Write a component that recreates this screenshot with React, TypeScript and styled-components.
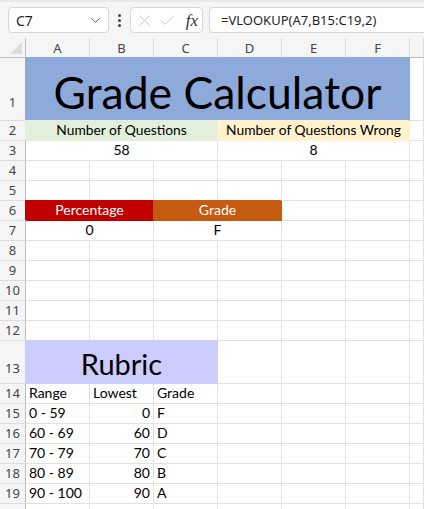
import React from "react";
import styled, { createGlobalStyle } from "styled-components";
import { ChevronDown, X, Check } from "lucide-react";

const GlobalStyle = createGlobalStyle`
  html, body {
    margin: 0;
    padding: 0;
    background: #ffffff;
    overflow: hidden;
  }
  * {
    box-sizing: border-box;
  }
`;

const CELL_FONT = `Lato, "Liberation Sans", sans-serif`;
const UI_FONT = `"Noto Sans", "Open Sans", sans-serif`;

const Window = styled.div`
  width: 424px;
  height: 509px;
  display: flex;
  flex-direction: column;
  background: #ffffff;
  overflow: hidden;
`;

const Toolbar = styled.div`
  height: 38px;
  flex: 0 0 38px;
  display: flex;
  align-items: center;
  padding: 0 0 0 8px;
  background: #f5f5f5;
  border-top: 2px solid #e9e9e9;
`;

const NameBox = styled.div`
  width: 101px;
  height: 26px;
  display: flex;
  align-items: center;
  justify-content: space-between;
  padding: 0 5px 0 7px;
  background: #ffffff;
  border: 1px solid #d6d6d6;
  border-radius: 4px;
  font-family: ${UI_FONT};
  font-size: 14px;
  color: #1f1f1f;
  & svg {
    color: #555;
  }
`;

const Dots = styled.div`
  width: 21px;
  display: flex;
  flex-direction: column;
  align-items: center;
  gap: 2px;
  & span {
    width: 3px;
    height: 3px;
    border-radius: 50%;
    background: #444;
  }
`;

const FuncBox = styled.div`
  width: 73px;
  height: 26px;
  display: flex;
  align-items: center;
  padding: 0 4px 0 4px;
  gap: 4px;
  background: #ffffff;
  border: 1px solid #d6d6d6;
  border-radius: 4px;
  & svg {
    color: #c4c4c4;
  }
`;

const Fx = styled.span`
  margin-left: auto;
  font-family: "Liberation Serif", "DejaVu Serif", serif;
  font-style: italic;
  font-size: 17px;
  color: #333;
  line-height: 1;
`;

const FormulaBox = styled.div`
  flex: 1;
  height: 26px;
  margin-left: 6px;
  display: flex;
  align-items: center;
  padding-left: 11px;
  background: #ffffff;
  border: 1px solid #d6d6d6;
  border-right: none;
  border-radius: 4px 0 0 4px;
  font-family: ${UI_FONT};
  font-size: 13px;
  color: #1f1f1f;
  white-space: nowrap;
`;

const Sheet = styled.div<{ $rows: string }>`
  flex: 1;
  display: grid;
  grid-template-columns: 26px repeat(6, 64px) 1fr;
  grid-template-rows: ${(p) => p.$rows};
  overflow: hidden;
`;

const Corner = styled.div`
  position: relative;
  background: #f5f5f5;
  border-right: 1px solid #bdbdbd;
  border-bottom: 1px solid #bdbdbd;
  &::after {
    content: "";
    position: absolute;
    right: 3px;
    bottom: 3px;
    width: 0;
    height: 0;
    border-left: 12px solid transparent;
    border-bottom: 12px solid #dcdcdc;
  }
`;

const ColHead = styled.div`
  display: flex;
  align-items: center;
  justify-content: center;
  background: #f5f5f5;
  border-right: 1px solid #dcdcdc;
  border-bottom: 1px solid #bdbdbd;
  font-family: ${UI_FONT};
  font-size: 13px;
  color: #444;
`;

const RowHead = styled.div<{ $pb: number }>`
  display: flex;
  align-items: flex-end;
  justify-content: center;
  padding-bottom: ${(p) => p.$pb}px;
  background: #f5f5f5;
  border-right: 1px solid #bdbdbd;
  border-bottom: 1px solid #dcdcdc;
  font-family: ${UI_FONT};
  font-size: 13px;
  line-height: 16px;
  color: #444;
`;

const Cell = styled.div<{
  $span: number;
  $bg?: string;
  $color?: string;
  $size: number;
  $align: "left" | "center" | "right";
  $pb: number;
}>`
  grid-column: span ${(p) => p.$span};
  display: flex;
  align-items: flex-end;
  justify-content: ${(p) =>
    p.$align === "left" ? "flex-start" : p.$align === "right" ? "flex-end" : "center"};
  padding: 0 3px ${(p) => p.$pb}px 3px;
  background: ${(p) => p.$bg || "#ffffff"};
  border-right: 1px solid ${(p) => (p.$bg ? "transparent" : "#e1e1e1")};
  border-bottom: 1px solid ${(p) => (p.$bg ? "transparent" : "#e1e1e1")};
  box-shadow: ${(p) => (p.$bg ? `-1px -1px 0 0 ${p.$bg}` : "none")};
  font-family: ${CELL_FONT};
  font-size: ${(p) => p.$size}px;
  line-height: 1;
  color: ${(p) => p.$color || "#000"};
  white-space: nowrap;
`;

type CellData = {
  text?: string;
  span?: number;
  bg?: string;
  color?: string;
  size?: number;
  align?: "left" | "center" | "right";
  pb?: number;
};

type RowData = { n: number; h: number; label?: boolean; cells: CellData[] };

const blank = (k: number): CellData[] => Array.from({ length: k }, () => ({}));

const rubric: [string, string, string][] = [
  ["0 - 59", "0", "F"],
  ["60 - 69", "60", "D"],
  ["70 - 79", "70", "C"],
  ["80 - 89", "80", "B"],
  ["90 - 100", "90", "A"],
];

const rows: RowData[] = [
  {
    n: 1,
    h: 63,
    cells: [
      { text: "Grade Calculator", span: 6, bg: "#8eaadb", size: 44.5, pb: 6 },
      ...blank(1),
    ],
  },
  {
    n: 2,
    h: 20,
    cells: [
      { text: "Number of Questions", span: 3, bg: "#e2efda", size: 13.8 },
      { text: "Number of Questions Wrong", span: 3, bg: "#fff2cc", size: 13.8 },
      ...blank(1),
    ],
  },
  {
    n: 3,
    h: 20,
    cells: [{ text: "58", span: 3 }, { text: "8", span: 3 }, ...blank(1)],
  },
  { n: 4, h: 20, cells: blank(7) },
  { n: 5, h: 20, cells: blank(7) },
  {
    n: 6,
    h: 20,
    cells: [
      { text: "Percentage", span: 2, bg: "#c00000", color: "#ffffff" },
      { text: "Grade", span: 2, bg: "#c55a11", color: "#ffffff" },
      ...blank(3),
    ],
  },
  {
    n: 7,
    h: 20,
    cells: [{ text: "0", span: 2 }, { text: "F", span: 2 }, ...blank(3)],
  },
  { n: 8, h: 20, cells: blank(7) },
  { n: 9, h: 20, cells: blank(7) },
  { n: 10, h: 20, cells: blank(7) },
  { n: 11, h: 20, cells: blank(7) },
  { n: 12, h: 20, cells: blank(7) },
  {
    n: 13,
    h: 43,
    cells: [{ text: "Rubric", span: 3, bg: "#ccccff", size: 29, pb: 5 }, ...blank(4)],
  },
  {
    n: 14,
    h: 20,
    cells: [
      { text: "Range", align: "left" },
      { text: "Lowest", align: "left" },
      { text: "Grade", align: "left" },
      ...blank(4),
    ],
  },
  ...rubric.map(([range, low, grade], i) => ({
    n: 15 + i,
    h: 20,
    cells: [
      { text: range, align: "left" as const },
      { text: low, align: "right" as const },
      { text: grade, align: "left" as const },
      ...blank(4),
    ],
  })),
  // only the top few pixels of row 20 are in view, its number is hidden below the edge
  { n: 20, h: 20, label: false, cells: blank(7) },
];

const COLS = ["A", "B", "C", "D", "E", "F", ""];

const rowHeadPad = (h: number) => (h > 50 ? 10 : h > 30 ? 7 : 2);

export default function App() {
  const template = ["20px", ...rows.map((r) => `${r.h}px`)].join(" ");
  return (
    <Window>
      <GlobalStyle />
      <Toolbar>
        <NameBox>
          <span>C7</span>
          <ChevronDown size={15} strokeWidth={1.6} />
        </NameBox>
        <Dots>
          <span />
          <span />
          <span />
        </Dots>
        <FuncBox>
          <X size={19} strokeWidth={1.2} />
          <Check size={19} strokeWidth={1.2} />
          <Fx>fx</Fx>
        </FuncBox>
        <FormulaBox>=VLOOKUP(A7,B15:C19,2)</FormulaBox>
      </Toolbar>
      <Sheet $rows={template}>
        <Corner />
        {COLS.map((c, i) => (
          <ColHead key={i}>{c}</ColHead>
        ))}
        {rows.map((r) => (
          <React.Fragment key={r.n}>
            <RowHead $pb={rowHeadPad(r.h)}>{r.label === false ? "" : r.n}</RowHead>
            {r.cells.map((c, j) => (
              <Cell
                key={j}
                $span={c.span || 1}
                $bg={c.bg}
                $color={c.color}
                $size={c.size || 14}
                $align={c.align || "center"}
                $pb={c.pb ?? 3}
              >
                {c.text}
              </Cell>
            ))}
          </React.Fragment>
        ))}
      </Sheet>
    </Window>
  );
}
